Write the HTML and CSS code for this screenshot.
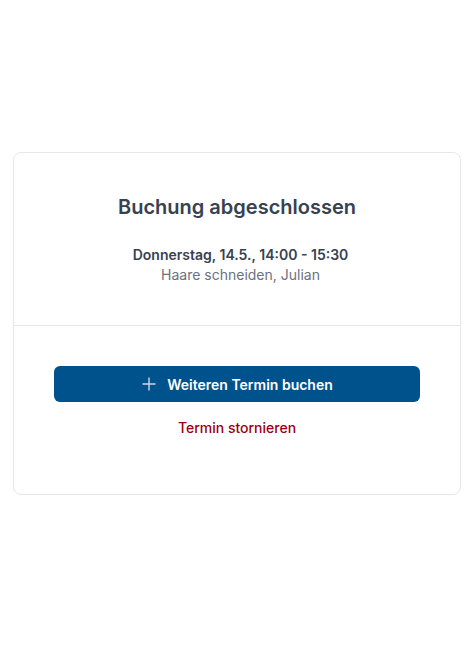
FILE: index.html
```html
<!DOCTYPE html>
<html lang="de">
<head>
<meta charset="utf-8">
<title>Buchung abgeschlossen</title>
<link rel="stylesheet" href="styles.css">
</head>
<body>
<main class="page">
  <section class="card">
    <div class="card-top">
      <h1 class="title">Buchung abgeschlossen</h1>
      <div class="details">
        <p class="date">Donnerstag, 14.5., 14:00 - 15:30</p>
        <p class="service">Haare schneiden, Julian</p>
      </div>
    </div>
    <div class="card-bottom">
      <button class="btn-primary" type="button">
        <svg class="plus" viewBox="0 0 16 16" width="16" height="16" aria-hidden="true"><path d="M8 2v12M2 8h12" stroke="currentColor" stroke-width="1.4" stroke-linecap="round" fill="none"/></svg>
        <span>Weiteren Termin buchen</span>
      </button>
      <a class="cancel" href="#">Termin stornieren</a>
    </div>
  </section>
</main>
</body>
</html>
```
FILE: styles.css
```css
* { box-sizing: border-box; }
html, body { margin: 0; padding: 0; background: #ffffff; }
body {
  font-family: Inter, "Noto Sans", "Liberation Sans", sans-serif;
  color: #374151;
}
.page {
  padding: 152px 0 0 13px;
  display: flex;
  justify-content: flex-start;
}
.card {
  width: 448px;
  border: 1px solid #e5e7eb;
  border-radius: 8px;
  background: #fff;
}
.card-top {
  padding: 40px 24px 40px;
  text-align: center;
  border-bottom: 1px solid #e5e7eb;
}
.title {
  margin: 0;
  font-size: 20px;
  line-height: 28px;
  font-weight: 600;
  color: #374151;
}
.details { margin-top: 24px; padding-left: 7px; }
.date {
  margin: 0;
  font-size: 14px;
  line-height: 20px;
  font-weight: 600;
  color: #374151;
}
.service {
  margin: 0;
  font-size: 14px;
  line-height: 20px;
  color: #6b7280;
}
.card-bottom {
  padding: 40px 40px 56px;
  display: flex;
  flex-direction: column;
  align-items: center;
  gap: 16px;
}
.btn-primary {
  width: 100%;
  height: 36px;
  border: 0;
  border-radius: 6px;
  background: #00528c;
  color: #fff;
  font-family: inherit;
  font-size: 14px;
  font-weight: 600;
  display: flex;
  align-items: center;
  justify-content: center;
  gap: 10px;
  cursor: pointer;
}
.plus { color: #c9d7e6; }
.cancel {
  font-size: 14px;
  line-height: 20px;
  color: #9b0012;
  text-decoration: none;
  font-weight: 500;
}
```
